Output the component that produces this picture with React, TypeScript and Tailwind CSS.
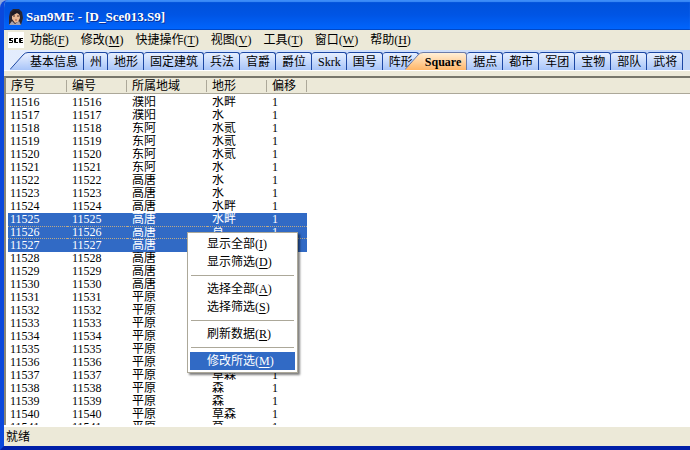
import { useState } from "react";

interface MenuEntry {
    label: string,
    hotkey: string
}

interface Tile {
    id: number,
    region: string,
    terrain: string
}

const menus: MenuEntry[] = [
    { label: "功能", hotkey: "F" },
    { label: "修改", hotkey: "M" },
    { label: "快捷操作", hotkey: "T" },
    { label: "视图", hotkey: "V" },
    { label: "工具", hotkey: "T" },
    { label: "窗口", hotkey: "W" },
    { label: "帮助", hotkey: "H" }
];

const tabs = [
    "基本信息", "州", "地形", "固定建筑", "兵法", "官爵", "爵位", "Skrk", "国号", "阵形",
    "Square", "据点", "都市", "军团", "宝物", "部队", "武将"
];

const contextGroups: MenuEntry[][] = [
    [{ label: "显示全部", hotkey: "I" }, { label: "显示筛选", hotkey: "D" }],
    [{ label: "选择全部", hotkey: "A" }, { label: "选择筛选", hotkey: "S" }],
    [{ label: "刷新数据", hotkey: "R" }],
    [{ label: "修改所选", hotkey: "M" }]
];

const terrains = [
    "水畔", "水", "水贰", "水贰", "水贰", "水", "水", "水", "水畔", "水畔", "草", "草", "草",
    "草", "草", "草", "草", "草", "草", "草", "草", "草森", "森", "森", "草森", "草"
];

const regionOf = (id: number) => {
    if (id < 11518) return "濮阳";
    if (id < 11522) return "东阿";
    if (id < 11531) return "高唐";
    return "平原";
};

const tiles: Tile[] = terrains.map((terrain, index) => ({
    id: 11516 + index,
    region: regionOf(11516 + index),
    terrain
}));

const selected = [11525, 11526, 11527];
const focused = 11526;

function Hotkey({ label, hotkey }: MenuEntry) {
    return <>{label}(<span className="underline underline-offset-2">{hotkey}</span>)</>;
}

function Portrait() {
    return (
        <svg viewBox="0 0 16 16" className="h-4 w-4 shrink-0" aria-hidden="true">
            <path d="M1 16V8L2 3 5 0h6l3 3 1 6-2 7z" fill="#2a2630" />
            <path d="M4 5 7 3l4 1 1 5-2 4-3 1-3-4z" fill="#e8b894" />
            <path d="M3 4 7 1l5 2v3L9 4 4 7z" fill="#1d1a24" />
            <path d="M5 7h2M9 7h2" stroke="#4a2c22" />
            <path d="M7 11h2" stroke="#a85548" />
            <path d="m1 16 3-4 3 3 4-3 2 4z" fill="#a9a4b0" />
        </svg>
    );
}

/* Slanted left side of the first tab and of the active one */
function Slant({ active }: { active: boolean }) {
    return (
        <svg viewBox="0 0 18 18" className="absolute bottom-0 right-full h-[18px] w-[18px]" aria-hidden="true">
            <defs>
                <linearGradient id={active ? "slant-on" : "slant-off"} x1="0" y1="0" x2="0" y2="1">
                    <stop offset="0" stopColor={active ? "#fff0d8" : "#f0f5ff"} />
                    <stop offset="1" stopColor={active ? "#ffb667" : "#a8c4f8"} />
                </linearGradient>
            </defs>
            <path d="M0 18 13 3Q15 0 18 0V18Z" fill={active ? "url(#slant-on)" : "url(#slant-off)"} />
            <path d="M0 17.5 13 3Q15 .5 18 .5" fill="none" stroke={active ? "#6b7ba8" : "#1c47a3"} />
        </svg>
    );
}

export default function App() {
    const [activeTab, setActiveTab] = useState<string>("Square");

    return (
        <div className="bg-[#8fa8dc]">
            <div className="flex h-screen flex-col overflow-hidden rounded-tl-lg border-b-4 border-l-4 border-b-[#001fa8] border-l-[#0a48dc] bg-[#ece9d8] font-['Liberation_Serif','Noto_Sans_CJK_SC',serif] text-xs leading-3 text-black">
                {/*TITLE BAR*/}
                <header className="flex h-[30px] shrink-0 items-center gap-0.5 bg-linear-to-b from-[#0050d8] via-[#0055e5] to-[#0066ff] px-1 pt-1 shadow-[inset_0_2px_1px_#3c8cf8,inset_0_-1px_0_#0048c8]">
                    <Portrait />
                    <h1 className="text-[13px] font-bold leading-4 text-white [text-shadow:1px_1px_#0a2f96]">San9ME - [D_Sce013.S9]</h1>
                </header>

                {/*MENU BAR*/}
                <nav className="flex h-5 shrink-0 items-center">
                    <span className="mr-1.5 ml-1 flex h-4 w-4 items-center justify-center bg-white">
                        <svg viewBox="0 0 14 5" className="h-[5px] w-3.5" fill="none" stroke="#000" aria-hidden="true">
                            <path d="M4 .5H.5v2H3.5v2H0M9 .5H5.5v4H9M14 .5h-3.5v4H14M10 2.5h3.5M1.5 0v3M6.5 0v5M11.5 0v5" />
                        </svg>
                    </span>
                    <div className="flex gap-3">
                        {menus.map((menu, index) => (
                            <button key={index} className="h-4 whitespace-nowrap"><Hotkey {...menu} /></button>
                        ))}
                    </div>
                </nav>

                {/*TABS*/}
                <div role="tablist" className="flex h-5 shrink-0 items-end overflow-hidden bg-linear-to-r from-[#e4edfd] to-[#c2d6f8] pl-6">
                    {tabs.map((tab, index) => {
                        const active = tab === activeTab;
                        const slanted = active || index === 0;
                        return (
                            <button
                                key={tab}
                                role="tab"
                                aria-selected={active}
                                onClick={() => setActiveTab(tab)}
                                className={`relative h-[18px] shrink-0 whitespace-nowrap rounded-tr-[3px] border-t border-r pr-[5px] ${slanted ? "pl-0.5" : "rounded-tl-[3px] pl-1.5"} ${active ? "z-10 ml-1 border-[#6b7ba8] bg-linear-to-b from-[#fff0d8] to-[#ffb667] font-bold" : "border-[#1c47a3] bg-linear-to-b from-[#e6efff] to-[#a8c4f8]"}`}
                            >
                                {slanted && <Slant active={active} />}
                                {tab}
                            </button>
                        );
                    })}
                </div>

                {/*RECORD LIST*/}
                <main className="relative min-h-0 flex-1 border-t border-white pt-[5px]">
                    <div className="h-full overflow-hidden border-t-2 border-l-2 border-t-[#77766a] border-l-[#8a8778] bg-white">
                        <table className="w-full table-fixed border-separate border-spacing-0 text-left">
                            <colgroup>
                                <col className="w-[61px]" />
                                <col className="w-[60px]" />
                                <col className="w-20" />
                                <col className="w-[60px]" />
                                <col className="w-10" />
                                <col />
                            </colgroup>
                            <thead className="bg-[#ece9d8]">
                                <tr className="h-4">
                                    {["序号", "编号", "所属地域", "地形", "偏移"].map((name) => (
                                        <th key={name} className="border-b border-[#aca899] p-0 font-normal">
                                            <div className="border-r border-[#aca899] pl-[5px]">{name}</div>
                                        </th>
                                    ))}
                                    <td className="border-b border-[#aca899] p-0"></td>
                                </tr>
                            </thead>
                            <tbody>
                                <tr className="h-0.5"><td colSpan={6} className="p-0"></td></tr>
                                {tiles.map((tile) => {
                                    const isSelected = selected.includes(tile.id);
                                    const isFocused = tile.id === focused;
                                    return (
                                        <tr key={tile.id} aria-selected={isSelected} className="h-[13px]">
                                            {[tile.id, tile.id, tile.region, tile.terrain, 1].map((value, index) => (
                                                <td key={index} className={`p-0 ${index === 0 ? "border-l-2 border-white" : ""}`}>
                                                    <div className={`h-[13px] overflow-hidden ${index === 0 ? "pl-0.5" : "pl-[5px]"} ${isSelected ? "bg-[#316ac5] text-white" : ""} ${isFocused ? "border-y border-dotted border-[#b9a98a] leading-[11px]" : "leading-[13px]"}`}>
                                                        {value}
                                                    </div>
                                                </td>
                                            ))}
                                            <td className="p-0"></td>
                                        </tr>
                                    );
                                })}
                            </tbody>
                        </table>
                    </div>

                    {/*CONTEXT MENU*/}
                    <div role="menu" className="absolute top-[161px] left-[183px] w-[111px] border border-[#aca899] bg-white p-0.5 shadow-[2px_2px_2px_rgba(0,0,0,0.5)]">
                        {contextGroups.map((group, index) => (
                            <div key={index} className={index > 0 ? "before:mx-px before:my-1 before:block before:h-px before:bg-[#aca899]" : ""}>
                                {group.map((entry) => (
                                    <button
                                        key={entry.label}
                                        role="menuitem"
                                        className={`block h-[18px] w-full pl-[17px] text-left ${entry.label === "修改所选" ? "bg-[#316ac5] text-white" : ""}`}
                                    >
                                        <Hotkey {...entry} />
                                    </button>
                                ))}
                            </div>
                        ))}
                    </div>
                </main>

                {/*STATUS BAR*/}
                <footer className="flex h-[21px] shrink-0 items-center border-t-2 border-white pl-0.5">就绪</footer>
            </div>
        </div>
    );
}
